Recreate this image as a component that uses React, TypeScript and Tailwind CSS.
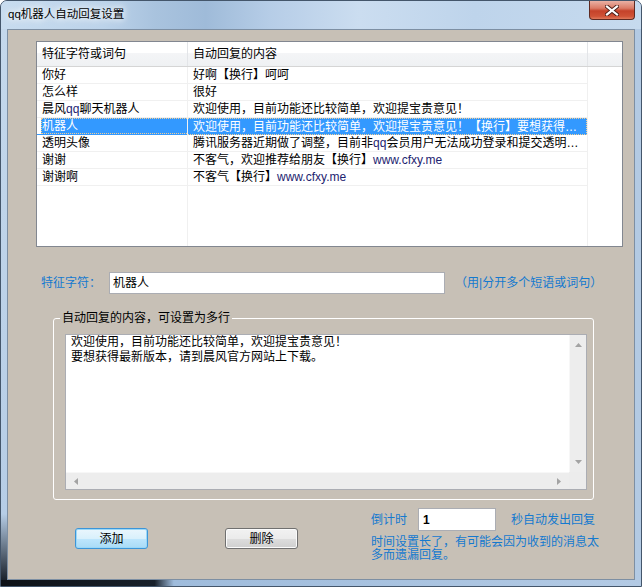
import React from "react";

const FONT = "[font-family:'Liberation_Sans','Noto_Sans_CJK_SC',sans-serif]";

const rows: [string, string][] = [
  ["你好", "好啊【换行】呵呵"],
  ["怎么样", "很好"],
  ["晨风qq聊天机器人", "欢迎使用，目前功能还比较简单，欢迎提宝贵意见！"],
  ["机器人", "欢迎使用，目前功能还比较简单，欢迎提宝贵意见！【换行】要想获得…"],
  ["透明头像", "腾讯服务器近期做了调整，目前非qq会员用户无法成功登录和提交透明…"],
  ["谢谢", "不客气，欢迎推荐给朋友【换行】www.cfxy.me"],
  ["谢谢啊", "不客气【换行】www.cfxy.me"],
];

const SELECTED = 3;

// latin runs are drawn a little smaller and bluish, like the ClearType text in the shot
function Txt({ s, sel }: { s: string; sel: boolean }) {
  const parts = s.split(/([A-Za-z0-9.]+)/);
  return (
    <>
      {parts.map((p, i) =>
        /^[A-Za-z0-9.]+$/.test(p) ? (
          <span key={i} className={sel ? "text-[12px]" : "text-[12px] text-[#1d2370]"}>
            {p}
          </span>
        ) : (
          <span key={i}>{p}</span>
        )
      )}
    </>
  );
}

function Arrow({ dir }: { dir: "up" | "down" | "left" | "right" }) {
  const pts = {
    up: "0,4 3.5,0 7,4",
    down: "0,0 3.5,4 7,0",
    left: "4,0 0,3.5 4,7",
    right: "0,0 4,3.5 0,7",
  }[dir];
  const vertical = dir === "up" || dir === "down";
  return (
    <svg width={vertical ? 7 : 4} height={vertical ? 4 : 7} viewBox={vertical ? "0 0 7 4" : "0 0 4 7"}>
      <polygon points={pts} fill="#a3a3a3" />
    </svg>
  );
}

function ListView() {
  return (
    <div className="ml-[28px] mt-[11px] w-[587px] h-[206px] border border-[#828790] bg-white flex flex-col">
      {/* header */}
      <div className="h-[25px] flex border-b border-[#d5d5d5] bg-[linear-gradient(to_bottom,#ffffff_0%,#ffffff_44%,#f4f5f7_45%,#eff1f3_100%)] leading-[16px]">
        <div className="w-[151px] border-r border-[#e3e5e8] pl-[5px] flex items-center">特征字符或词句</div>
        <div className="w-[400px] border-r border-[#e3e5e8] pl-[5px] flex items-center">自动回复的内容</div>
        <div className="flex-1" />
      </div>
      {/* body */}
      <div className="flex-1 flex">
        <div className="w-[151px] border-r border-[#f0f0f0] flex flex-col">
          {rows.map(([k], i) => {
            const sel = i === SELECTED;
            return (
              <div
                key={k}
                className={
                  sel
                    ? "h-[17px] pl-[4px] border-b border-[#3399ff] flex"
                    : "h-[17px] pl-[4px] border-b border-[#f0f0f0] flex"
                }
              >
                <div
                  className={
                    sel
                      ? "flex-1 flex items-center leading-[16px] bg-[#3399ff] text-white border-y border-l border-dotted border-[#f2cf97] whitespace-nowrap overflow-hidden"
                      : "flex-1 flex items-center leading-[16px] pl-[1px] whitespace-nowrap overflow-hidden"
                  }
                >
                  <Txt s={k} sel={sel} />
                </div>
              </div>
            );
          })}
        </div>
        <div className="w-[400px] border-r border-[#f0f0f0] flex flex-col">
          {rows.map(([k, v], i) => {
            const sel = i === SELECTED;
            return (
              <div
                key={k}
                className={
                  sel
                    ? "h-[17px] pl-[5px] flex items-center leading-[16px] bg-[#3399ff] text-white border-y border-r border-dotted border-[#f2cf97] whitespace-nowrap overflow-hidden"
                    : "h-[17px] pl-[5px] flex items-center leading-[16px] border-b border-[#f0f0f0] whitespace-nowrap overflow-hidden"
                }
              >
                <Txt s={v} sel={sel} />
              </div>
            );
          })}
        </div>
        <div className="flex-1" />
      </div>
    </div>
  );
}

function ReplyBox() {
  return (
    <div className="ml-[11px] mt-[8px] w-[522px] h-[156px] border border-[#abadb3] bg-white flex flex-col">
      <div className="flex-1 flex min-h-0">
        <div className="flex-1 pl-[5px] leading-[15px]">
          欢迎使用，目前功能还比较简单，欢迎提宝贵意见！
          <br />
          要想获得最新版本，请到晨风官方网站上下载。
        </div>
        <div className="w-[17px] bg-[#ededed] border-l border-[#f7f7f7] flex flex-col items-center justify-between py-[8px]">
          <Arrow dir="up" />
          <Arrow dir="down" />
        </div>
      </div>
      <div className="h-[17px] flex">
        <div className="flex-1 bg-[#ededed] border-t border-[#f7f7f7] flex items-center justify-between px-[8px]">
          <Arrow dir="left" />
          <Arrow dir="right" />
        </div>
        <div className="w-[17px] bg-[#ececec]" />
      </div>
    </div>
  );
}

export default function App() {
  return (
    <div
      className={`w-[642px] h-[587px] flex flex-col overflow-hidden rounded-t-[7px] border border-[#44566b] bg-[#b7cde6] ${FONT} text-[12px] text-black`}
    >
      {/* title bar */}
      <div className="h-[28px] flex items-start bg-[linear-gradient(90deg,#c8dcef_0%,#bcd3ea_16%,#a9c3de_24%,#9fbbd9_32%,#b6cde7_42%,#cbddf0_56%,#bed4eb_74%,#c6daee_100%)]">
        <div className="pl-[7px] pt-[6px] text-[11.5px] leading-[14px] [text-shadow:0_0_6px_#ffffff,0_0_10px_#ffffff]">
          qq机器人自动回复设置
        </div>
        <div className="ml-auto mr-[6px] w-[46px] h-[19px] rounded-b-[4px] border border-t-0 border-[#5e2a22] bg-[linear-gradient(to_bottom,#eab1a4_0%,#db7b66_40%,#c5422a_55%,#cf5236_85%,#e07a5c_100%)] flex items-center justify-center">
          <svg width="14" height="11" viewBox="0 0 14 11">
            <path d="M2 1.5 L12 9.5 M12 1.5 L2 9.5" stroke="#4a1d17" strokeWidth="4" strokeLinecap="square" />
            <path d="M2 1.5 L12 9.5 M12 1.5 L2 9.5" stroke="#ffffff" strokeWidth="2.2" strokeLinecap="square" />
          </svg>
        </div>
      </div>

      {/* frame sides + client area */}
      <div className="flex-1 flex min-h-0">
        <div className="w-[6px] bg-[linear-gradient(to_bottom,#c4d8ec_0%,#b6cde6_88%,#1a222c_100%)]" />
        <div className="flex-1 border border-[#7d8fa3] bg-[#c7c0b6] flex flex-col">
          <ListView />

          <div className="mt-[25px] flex items-center leading-[16px]">
            <div className="ml-[33px] text-[#1479cf]">特征字符：</div>
            <div className="ml-[8px] w-[336px] h-[22px] border border-[#abadb3] bg-white pl-[3px] flex items-center">
              机器人
            </div>
            <div className="ml-[10px] text-[#1479cf]">（用|分开多个短语或词句）</div>
          </div>

          <fieldset className="mt-[16px] ml-[45px] w-[541px] border border-white rounded-[3px] pb-[9px]">
            <legend className="ml-[6px] px-[2px] leading-[16px]">自动回复的内容，可设置为多行</legend>
            <ReplyBox />
          </fieldset>

          <div className="flex items-start">
            <button className="ml-[67px] mt-[28px] w-[73px] h-[21px] rounded-[3px] border border-[#3c95d8] bg-[linear-gradient(to_bottom,#eaf6fd_0%,#d9f0fc_50%,#bee6fd_51%,#a9dbf6_100%)] shadow-[inset_0_0_0_1px_#9bd8f8] leading-[16px]">
              添加
            </button>
            <button className="ml-[77px] mt-[28px] w-[73px] h-[21px] rounded-[3px] border border-[#707070] bg-[linear-gradient(to_bottom,#f2f2f2_0%,#ebebeb_50%,#dddddd_51%,#cfcfcf_100%)] shadow-[inset_0_0_0_1px_#fbfbfb] leading-[16px]">
              删除
            </button>
            <div className="ml-[73px] mt-[8px] flex flex-col text-[#1479cf]">
              <div className="flex items-center leading-[16px]">
                <div>倒计时</div>
                <div className="ml-[11px] w-[78px] h-[23px] border border-[#abadb3] bg-white pl-[4px] flex items-center text-black font-bold">
                  1
                </div>
                <div className="ml-[15px]">秒自动发出回复</div>
              </div>
              <div className="mt-[5px] w-[232px] leading-[13px]">
                时间设置长了，有可能会因为收到的消息太多而遗漏回复。
              </div>
            </div>
          </div>
        </div>
        <div className="w-[6px] bg-[#b3cae3]" />
      </div>
      <div className="h-[6px] bg-[linear-gradient(to_right,#0d1116_0%,#18202a_24%,#9fbcdc_27%,#b3cae4_100%)]" />
    </div>
  );
}
